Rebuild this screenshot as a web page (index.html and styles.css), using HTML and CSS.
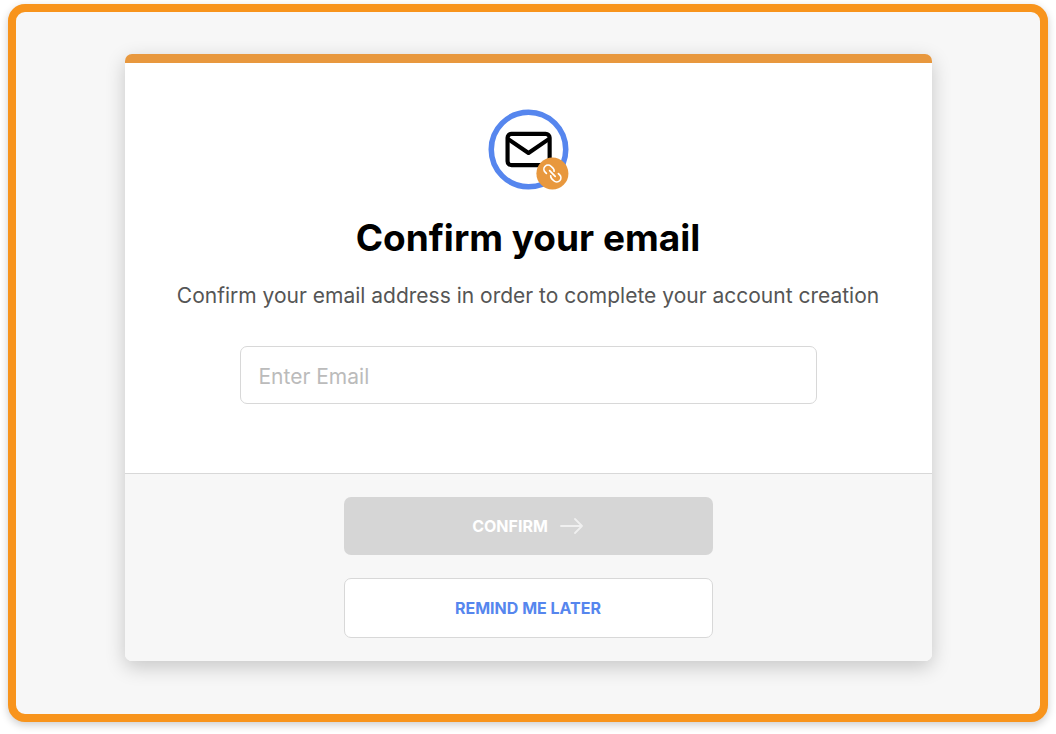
FILE: index.html
```html
<!DOCTYPE html>
<html lang="en">
<head>
    <meta charset="UTF-8">
    <meta name="viewport" content="width=device-width, initial-scale=1.0">
    <title>Confirm your email</title>
    <link rel="stylesheet" href="styles.css">
</head>
<body>
    <main class="frame">
        <form class="card">
            <div class="card-body">
                <!-- Envelope with link badge -->
                <svg class="email-icon" viewBox="0 0 82 82" fill="none" aria-hidden="true">
                    <circle cx="41" cy="41" r="37.7" stroke="#5686ee" stroke-width="5.6"/>
                    <rect x="19.8" y="25.2" width="42.6" height="31.6" rx="4" stroke="#000" stroke-width="4.2"/>
                    <path d="M20.5 30.5 41 44.5 61.5 30.5" stroke="#000" stroke-width="4.2" stroke-linejoin="round"/>
                    <circle cx="65.2" cy="65.3" r="16.2" fill="#e8983e"/>
                    <g transform="translate(65.2 65.3) rotate(45)" stroke="#fff" stroke-width="1.7" stroke-linecap="round">
                        <path d="M-4.4 4.2h-1.8a4.2 4.2 0 0 1 0-8.4h2.8a4.2 4.2 0 0 1 3 1.3"/>
                        <path d="M4.4 -4.2h1.8a4.2 4.2 0 0 1 0 8.4h-2.8a4.2 4.2 0 0 1-3-1.3"/>
                        <path d="M-4 0h8"/>
                    </g>
                </svg>
                <h1>Confirm your email</h1>
                <p>Confirm your email address in order to complete your account creation</p>
                <input type="email" class="email-input" placeholder="Enter Email" aria-label="Email">
            </div>
            <div class="card-footer">
                <button type="submit" class="btn btn-confirm" disabled>
                    Confirm
                    <svg class="arrow" viewBox="0 0 24 18" fill="none" aria-hidden="true">
                        <path d="M1 9h21M15 2l7 7-7 7" stroke="#f0f0f0" stroke-width="1.8" stroke-linecap="round" stroke-linejoin="round"/>
                    </svg>
                </button>
                <button type="button" class="btn btn-later">Remind me later</button>
            </div>
        </form>
    </main>
</body>
</html>
```
FILE: styles.css
```css
* {
    box-sizing: border-box;
}

body {
    font-family: Inter, sans-serif;
    background-color: white;
    margin: 0;
    padding: 4px 8px 12px;
}

.frame {
    padding: 42px 16px 53px;
    background-color: #f7f7f7;
    border: 8px solid #f8941c;
    border-radius: 17px;
    box-shadow: 0 3px 8px rgba(0, 0, 0, 0.2);
}

.card {
    max-width: 807px;
    margin: 0 auto;
    background-color: white;
    border-top: 9px solid #e8983e;
    border-radius: 7px;
    box-shadow: 0 6px 20px rgba(0, 0, 0, 0.2);
}

.card-body {
    display: flex;
    flex-direction: column;
    align-items: center;
    padding: 46px 24px 69px;
    text-align: center;
}

.email-icon {
    width: 81px;
    height: 81px;
}

h1 {
    margin: 24px 0 20px;
    font-size: 37px;
    line-height: 48px;
    font-weight: 700;
    color: black;
}

p {
    margin: 0 0 36px;
    font-size: 21px;
    line-height: 28px;
    color: #555;
}

.email-input {
    width: 100%;
    max-width: 577px;
    height: 58px;
    padding: 2px 18px 0;
    font-family: inherit;
    font-size: 21px;
    color: #333;
    background-color: white;
    border: 1px solid #d8d8d8;
    border-radius: 7px;
}

.email-input::placeholder {
    color: #bbb;
}

.card-footer {
    display: flex;
    flex-direction: column;
    align-items: center;
    gap: 23px;
    padding: 23px 24px;
    background-color: #f7f7f7;
    border-top: 1px solid #d8d8d8;
    border-radius: 0 0 7px 7px;
}

.btn {
    display: flex;
    align-items: center;
    justify-content: center;
    gap: 12px;
    width: 100%;
    max-width: 369px;
    height: 58px;
    font-family: inherit;
    font-size: 16px;
    font-weight: 700;
    text-transform: uppercase;
    border: none;
    border-radius: 7px;
    cursor: pointer;
}

.btn-confirm {
    background-color: #d6d6d6;
    color: white;
}

.btn-confirm:disabled {
    cursor: default;
}

.btn-later {
    height: 60px;
    background-color: white;
    border: 1px solid #d8d8d8;
    color: #5686ee;
}

.arrow {
    width: 24px;
    height: 18px;
}
```
